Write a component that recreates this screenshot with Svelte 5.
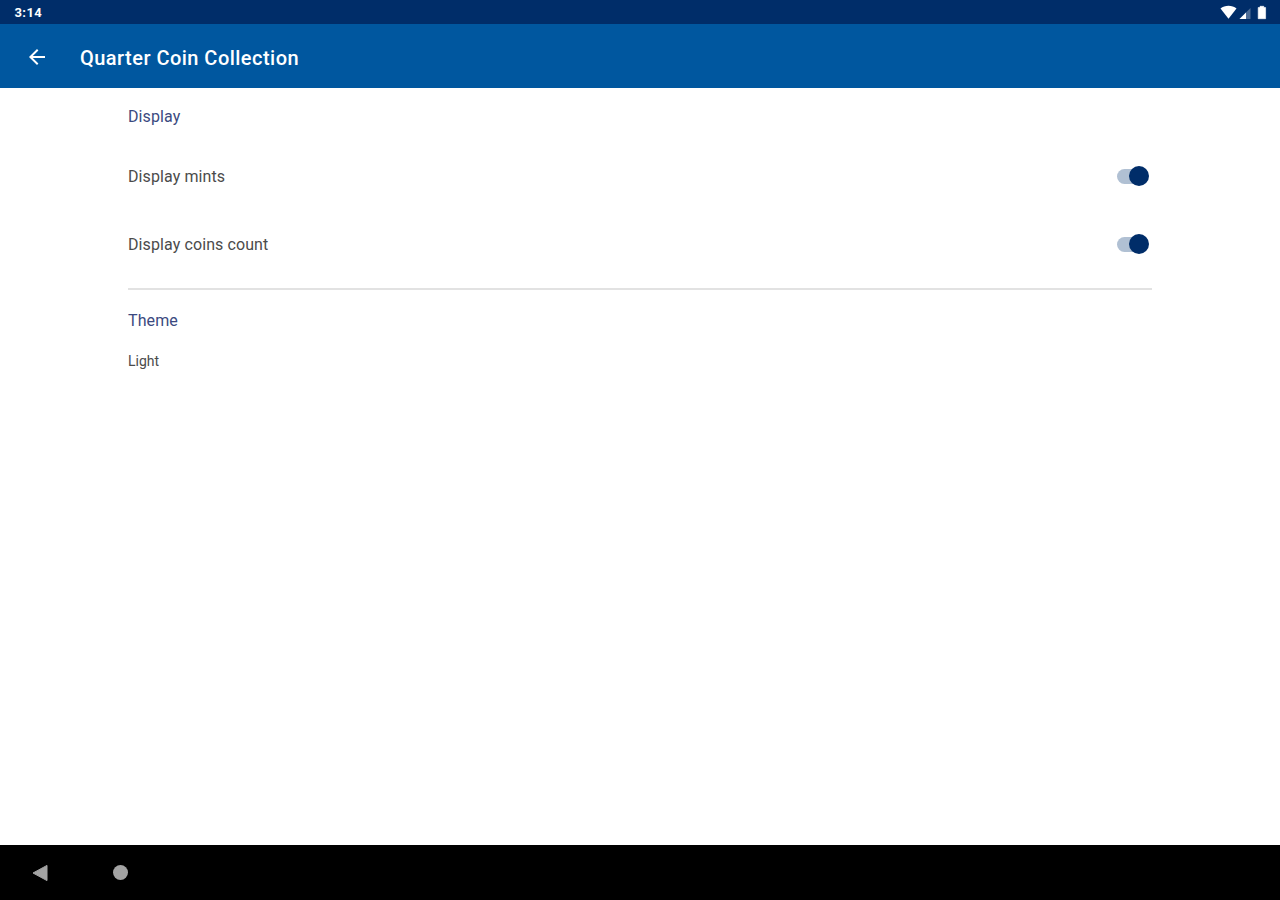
<script>
  let displayMints = $state(true);
  let displayCount = $state(true);
  let theme = $state("Light");
</script>

{#snippet toggle(label, checked, onclick)}
  <div class="row">
    <span class="label">{label}</span>
    <button
      class="switch"
      class:on={checked}
      role="switch"
      aria-checked={checked}
      aria-label={label}
      {onclick}
    >
      <span class="thumb"></span>
    </button>
  </div>
{/snippet}

<div class="screen">
  <div class="status-bar">
    <span class="clock">3:14</span>
    <svg class="status-icons" width="48" height="16" viewBox="0 0 48 16">
      <path d="M0.5 4.4C4.8 0.9 12.2 0.9 16.5 4.4L8.5 14.8Z" fill="#fff" />
      <path d="M30.5 4V15H19.5Z" fill="#fff" opacity="0.3" />
      <path d="M26 8.5V15H19.5Z" fill="#fff" />
      <path
        d="M40 2.3H43.8V3.5H45.6V14.7H38.2V3.5H40Z"
        fill="#fff"
        stroke="#fff"
        stroke-width="0.6"
        stroke-linejoin="round"
      />
    </svg>
  </div>

  <header class="app-bar">
    <button class="back" aria-label="Back">
      <svg width="24" height="24" viewBox="0 0 24 24">
        <path
          d="M20 11H7.83l5.59-5.59L12 4l-8 8 8 8 1.41-1.41L7.83 13H20v-2z"
          fill="#fff"
        />
      </svg>
    </button>
    <h1>Quarter Coin Collection</h1>
  </header>

  <main>
    <h2>Display</h2>
    {@render toggle("Display mints", displayMints, () => (displayMints = !displayMints))}
    {@render toggle("Display coins count", displayCount, () => (displayCount = !displayCount))}
    <hr />
    <h2 class="theme-title">Theme</h2>
    <p class="theme-value">{theme}</p>
  </main>

  <!-- System navigation -->
  <nav>
    <svg width="18" height="18" viewBox="0 0 18 18">
      <path d="M1 9L15 1.4V16.6Z" fill="#a3a3a3" stroke="#a3a3a3" stroke-linejoin="round" />
    </svg>
    <span class="home"></span>
  </nav>
</div>

<style>
  :global(body) {
    margin: 0;
    overflow: hidden;
  }

  .screen {
    display: flex;
    flex-direction: column;
    height: 100vh;
    background: #fff;
    font-family: Roboto, sans-serif;
  }

  .status-bar {
    display: flex;
    align-items: center;
    justify-content: space-between;
    box-sizing: border-box;
    height: 24px;
    padding: 0 12px 0 14.5px;
    background: #002d69;
    color: #fff;
  }

  .clock {
    padding-top: 1px;
    font-size: 13px;
    font-weight: 700;
    letter-spacing: 0.4px;
    line-height: 24px;
  }

  .app-bar {
    display: flex;
    align-items: center;
    height: 64px;
    background: #00579f;
    color: #fff;
  }

  button {
    border: none;
    background: none;
    padding: 0;
    cursor: pointer;
  }

  .back {
    display: flex;
    width: 24px;
    height: 24px;
    margin: 1px 31px 0 25px;
  }

  h1 {
    margin: 4px 0 0;
    font-size: 20px;
    font-weight: 500;
    letter-spacing: 0.47px;
    line-height: 28px;
  }

  main {
    flex: 1;
    padding: 17px 128px 0;
  }

  h2 {
    margin: 0;
    font-size: 16px;
    font-weight: 400;
    letter-spacing: 0.1px;
    line-height: 24px;
    color: #3b4a80;
  }

  .row {
    display: flex;
    align-items: center;
    justify-content: space-between;
    height: 68px;
    font-size: 16px;
    letter-spacing: 0.1px;
    color: #4b4b4b;
  }

  h2 + .row {
    margin-top: 13px;
  }

  .switch {
    display: flex;
    align-items: center;
    width: 29px;
    height: 15px;
    margin-right: 6px;
    border-radius: 8px;
    background: #ccc;
  }

  .switch.on {
    justify-content: flex-end;
    background: #b0c0d3;
  }

  .thumb {
    flex: none;
    width: 20px;
    height: 20px;
    border-radius: 50%;
    background: #757575;
  }

  .on .thumb {
    margin-right: -3px;
    background: #002d69;
  }

  hr {
    height: 2px;
    margin: 10px 0 0;
    border: none;
    background: #e2e2e2;
  }

  .theme-title {
    margin-top: 19px;
  }

  .theme-value {
    margin: 18px 0 0;
    font-size: 14px;
    line-height: 20px;
    color: #4b4b4b;
  }

  nav {
    display: flex;
    align-items: center;
    gap: 63px;
    height: 55px;
    padding-left: 32px;
    background: #000;
  }

  .home {
    width: 15px;
    height: 15px;
    border-radius: 50%;
    background: #a3a3a3;
  }
</style>
